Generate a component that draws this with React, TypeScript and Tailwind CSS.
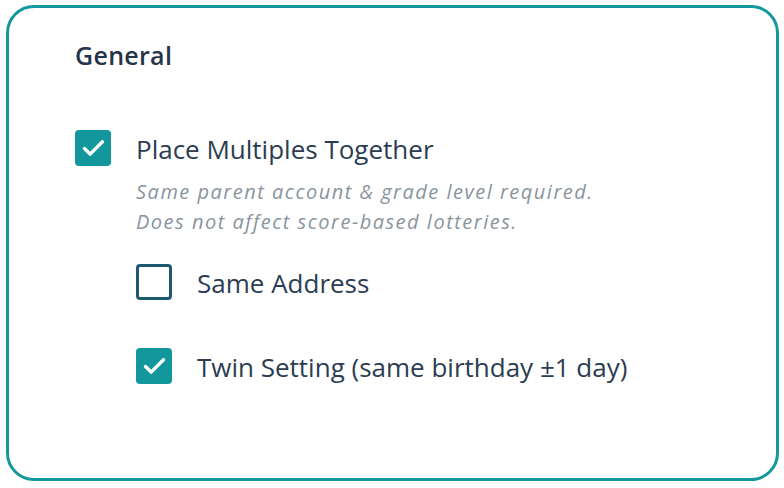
import { Check } from "lucide-react";

type BoxProps = { checked: boolean };

function Box({ checked }: BoxProps) {
  if (checked) {
    return (
      <span className="flex h-[36px] w-[36px] shrink-0 items-center justify-center rounded-[4px] bg-[#12979c]">
        <Check className="h-[27px] w-[27px] text-white" strokeWidth={3} />
      </span>
    );
  }
  return <span className="h-[36px] w-[36px] shrink-0 rounded-[4px] border-[3px] border-[#1d5a72] bg-white" />;
}

function Row({ checked, label }: { checked: boolean; label: string }) {
  return (
    <div className="flex items-center gap-[25px]">
      <Box checked={checked} />
      <span className="pt-[3px] text-[26px] leading-[33px] text-[#2c3d52]">{label}</span>
    </div>
  );
}

export default function App() {
  return (
    <div className="h-[488px] w-[784px] bg-white pl-[6px] pt-[5px]" style={{ fontFamily: '"Open Sans", sans-serif' }}>
      <div className="h-[476px] w-[773px] rounded-[28px] border-[3px] border-[#13989e] bg-white pl-[66px] pt-[31px]">
        <h2 className="text-[25px] font-semibold leading-[32px] tracking-[0.3px] text-[#253449]">General</h2>

        <div className="mt-[59px]">
          <Row checked label="Place Multiples Together" />
        </div>
        <div className="ml-[61px] mt-[11px] text-[20px] italic leading-[30px] tracking-[1.5px] text-[#8a949f]">
          <p>Same parent account &amp; grade level required.</p>
          <p>Does not affect score-based lotteries.</p>
        </div>

        <div className="ml-[61px] mt-[27px] flex flex-col gap-[48px]">
          <Row checked={false} label="Same Address" />
          <Row checked label="Twin Setting (same birthday ±1 day)" />
        </div>
      </div>
    </div>
  );
}
